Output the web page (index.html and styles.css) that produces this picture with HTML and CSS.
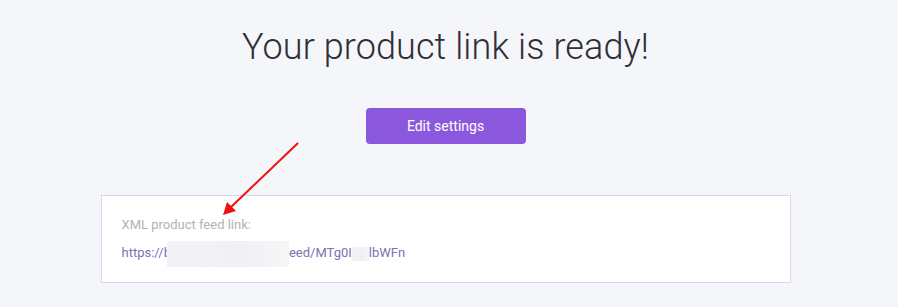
FILE: index.html
```html
<!doctype html>
<html lang="en">
<head>
    <meta charset="UTF-8">
    <title>Product link</title>
    <link rel="stylesheet" href="styles.css">
</head>
<body>
    <div class="page">
        <h1 class="title">Your product link is ready!</h1>
        <div class="actions">
            <a class="btn" href="#">Edit settings</a>
        </div>
        <div class="feed-box">
            <div class="feed-label">XML product feed link:</div>
            <div class="feed-url">https://b<span class="blur blur-long"></span>eed/MTg0I<span class="blur blur-short">...</span>lbWFn</div>
        </div>
    </div>

    <svg class="arrow" width="898" height="307" viewBox="0 0 898 307">
        <line x1="298" y1="143" x2="230" y2="208" stroke="#f01010" stroke-width="2"/>
        <polygon points="223,215 227,202 236,211" fill="#f01010"/>
    </svg>
</body>
</html>
```

FILE: styles.css
```css
*{
    padding: 0;
    margin: 0;
    box-sizing: border-box;
}
body{
    background: #f5f6fa;
    font-family: Roboto, "Liberation Sans", sans-serif;
    width: 898px;
    height: 307px;
    overflow: hidden;
    padding-right: 7px;
    position: relative;
}
.page{
    width: 690px;
    margin: 0 auto;
}
.title{
    padding-top: 25px;
    text-align: center;
    font-size: 36px;
    font-weight: 300;
    color: #2f2f38;
    line-height: 44px;
    letter-spacing: 0.1px;
}
.actions{
    margin-top: 39px;
    text-align: center;
}
.btn{
    display: inline-block;
    width: 160px;
    height: 36px;
    line-height: 36px;
    border-radius: 4px;
    background: #8b58dd;
    color: #fff;
    font-size: 14px;
    text-decoration: none;
}
.feed-box{
    margin-top: 51px;
    height: 88px;
    background: #fff;
    border: 1px solid #d7d8ea;
    padding: 19px 20px 0;
}
.feed-label{
    font-size: 13px;
    line-height: 20px;
    color: #b2b2b2;
}
.feed-url{
    margin-top: 8px;
    font-size: 13px;
    line-height: 20px;
    color: #7b73b3;
}
.blur{
    display: inline-block;
    vertical-align: middle;
    background: linear-gradient(90deg, #f3f3f7, #f1f1f5 60%, #f6f6f9);
}
.blur-long{
    width: 122px;
    height: 26px;
    margin: -3px 0 -3px -4px;
}
.blur-short{
    width: 17px;
    height: 14px;
    line-height: 14px;
    font-size: 11px;
    color: #e2e2ee;
    text-align: center;
    overflow: hidden;
}
.arrow{
    position: absolute;
    top: 0;
    left: 0;
    pointer-events: none;
}
```
